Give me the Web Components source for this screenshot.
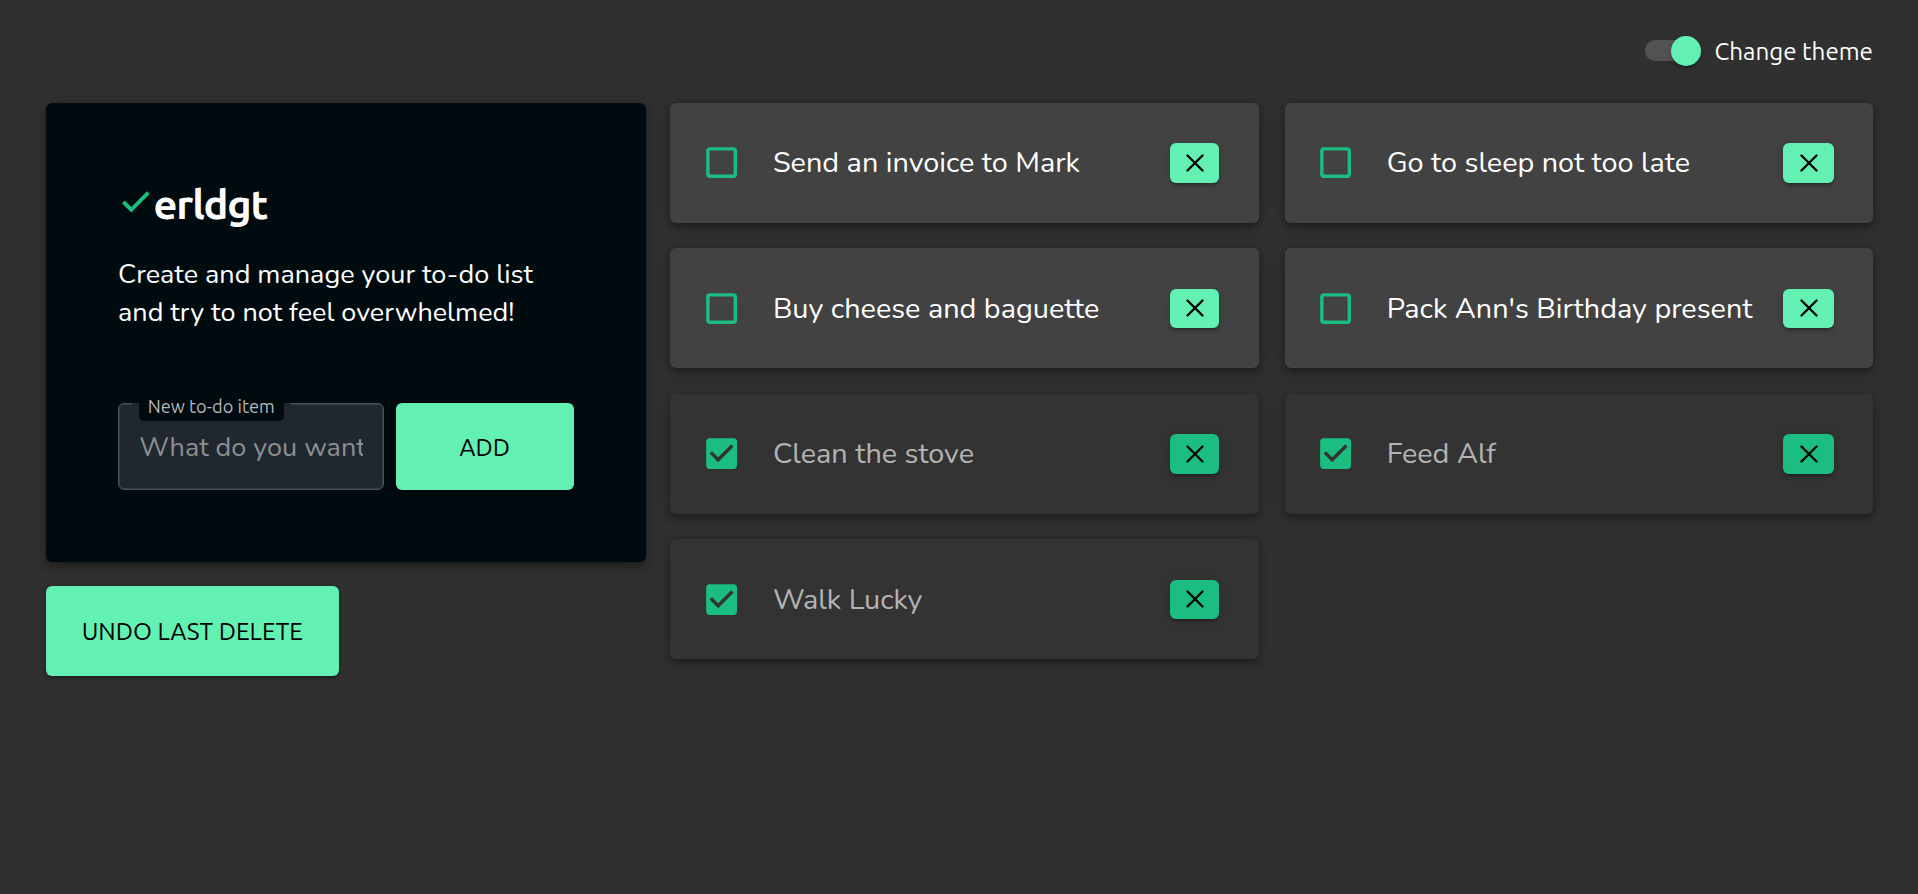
<!DOCTYPE html>
<html lang="en">
<head>
<meta charset="utf-8">
<title>erldgt</title>
<style>
html, body { margin: 0; background: #303030; }
body {
  --bg: #303030; --mint: #63f1b3; --green: #1bbd80; --ink: #000b10; --paper: #424242; --paper-done: #333333;
  --ui: Ubuntu, "Open Sans", "Noto Sans", sans-serif;
  --body: Nunito, Lato, "Open Sans", sans-serif;
  --lift: 0 3px 6px -1px rgba(0,0,0,.22), 0 6px 8px rgba(0,0,0,.14), 0 1px 15px rgba(0,0,0,.14);
  --btn-lift: 0 4px 2px -3px rgba(0,0,0,.2), 0 3px 3px rgba(0,0,0,.14), 0 1px 7px rgba(0,0,0,.12);
  color: #fff; font-family: var(--body);
}
</style>
</head>
<body>
<todo-app></todo-app>
<script>
const define = (name, html) => customElements.define(name, class extends HTMLElement {
  connectedCallback() {
    if (this.shadowRoot) return;
    const t = document.createElement('template');
    t.innerHTML = html;
    this.attachShadow({ mode: 'open' }).append(t.content.cloneNode(true));
  }
});

define('theme-switch', `<style>
:host{display:flex;align-items:center;width:228px;height:32px}
.track{flex:none;width:51px;height:21px;border-radius:11px;background:#525252;display:flex;align-items:center;justify-content:flex-end}
.thumb{flex:none;width:30px;height:30px;margin-right:-4.5px;border-radius:50%;background:var(--mint);box-shadow:var(--btn-lift)}
.label{margin:1.6px 0 0 18.4px;font:400 24.2px/32px var(--ui);white-space:nowrap}
</style><div class="track"><div class="thumb"></div></div>
<div class="label">Change theme</div>`);

define('mint-button', `<style>
:host{display:block}
button{display:flex;align-items:center;justify-content:center;width:100%;height:100%;border:0;padding:0;border-radius:6px;background:var(--fill,var(--mint));color:#000;box-shadow:var(--btn-lift);font:400 24.4px/32px var(--ui);white-space:nowrap}
</style><button><slot></slot></button>`);

define('brand-logo', `<style>
:host{display:flex;height:61px}
svg{flex:none;width:28px;height:23px;margin:17px 0 0 4.4px;fill:var(--green)}
.name{margin:1px 0 0 3.2px;font:700 41.5px/60px var(--ui);letter-spacing:-1.2px}
</style><svg viewBox="0 0 28 23"><path d="M0 13.2 2.7 10.5 9.3 17.1 25 1.3 27.7 4 9.3 22.4Z"/></svg>
<div class="name">erldgt</div>`);

define('text-field', `<style>
:host{display:block;position:relative;box-sizing:border-box;width:265.5px;height:87px;border:1px solid #4a5157;border-radius:6px;background:#20272f;box-shadow:inset 0 0 0 .5px #4a5157}
.notch{position:absolute;top:-1px;left:13px;width:159px;height:2px;background:#20272f}
.label{position:absolute;top:-10px;left:20px;width:145px;height:27px;box-sizing:border-box;padding-left:8.7px;border-radius:5px;background:var(--ink);color:#b3b6b7;font:400 18.2px/24px var(--ui);white-space:nowrap}
.hint{height:85px;margin:0 19.5px 0 20.2px;overflow:hidden;color:#8b8f92;font:400 27px/87px var(--body);white-space:nowrap}
</style><div class="notch"></div><div class="label">New to-do item</div>
<div class="hint">What do you want</div>`);

define('intro-card', `<style>
:host{display:block;box-sizing:border-box;width:600px;height:459px;padding:70px 72px 0;border-radius:6px;background:var(--ink);box-shadow:var(--lift)}
.copy{margin-top:22px;font:400 27px/38px var(--body);white-space:nowrap}
.form{display:flex;gap:12px;margin-top:71px}
mint-button{width:178.5px;height:87px}
</style><brand-logo></brand-logo>
<div class="copy">Create and manage your to-do list<br>and try to not feel overwhelmed!</div>
<div class="form"><text-field></text-field><mint-button>ADD</mint-button></div>`);

define('todo-item', `<style>
:host{display:flex;align-items:center;box-sizing:border-box;height:120px;padding:0 var(--end,40.2px) 0 var(--start,31.1px);border-radius:6px;background:var(--paper);box-shadow:var(--lift)}
:host([done]){background:var(--paper-done);--fill:var(--green)}
.box{flex:none;width:41.2px;height:41.2px;fill:var(--green)}
.on,:host([done]) .off{display:none}
:host([done]) .on{display:block}
.text{flex:1;min-width:0;margin:.7px 0 0 30.6px;font:400 28.85px/40px var(--body);white-space:nowrap}
:host([done]) .text{color:#b3b3b3}
mint-button{flex:none;width:var(--button,49.6px);height:39.3px}
.x{width:18px;height:18px;margin-left:.4px;stroke:#000;stroke-width:2.3;fill:none;stroke-linecap:round}
</style>
<svg class="box off" viewBox="0 0 24 24"><path d="M19 5v14H5V5h14m0-2H5c-1.1 0-2 .9-2 2v14c0 1.1.9 2 2 2h14c1.1 0 2-.9 2-2V5c0-1.1-.9-2-2-2z"/></svg>
<svg class="box on" viewBox="0 0 24 24"><path d="M19 3H5c-1.11 0-2 .9-2 2v14c0 1.1.89 2 2 2h14c1.11 0 2-.9 2-2V5c0-1.1-.89-2-2-2zm-9 14l-5-5 1.41-1.41L10 14.17l7.59-7.59L19 8l-9 9z"/></svg>
<div class="text"><slot></slot></div>
<mint-button><svg class="x" viewBox="0 0 18 18"><path d="M1.5 1.5 16.5 16.5M16.5 1.5 1.5 16.5"/></svg></mint-button>`);

define('todo-app', `<style>
:host{display:block;box-sizing:border-box;height:894px;padding:34.5px 45px 0 46px;background:var(--bg);overflow:hidden}
header{display:flex;justify-content:flex-end;height:68.5px}
main{display:flex;gap:24px;align-items:flex-start}
aside{display:flex;flex-direction:column;gap:24px}
.undo{width:292.6px;height:90px}
.list{display:grid;grid-template-columns:589.4px 588px;gap:25.45px 25.5px}
todo-item:nth-child(even){--start:30px;--end:39px;--button:51px}
</style>
<header><theme-switch></theme-switch></header>
<main><aside><intro-card></intro-card><mint-button class="undo">UNDO LAST DELETE</mint-button></aside>
<section class="list">
<todo-item>Send an invoice to Mark</todo-item>
<todo-item>Go to sleep not too late</todo-item>
<todo-item>Buy cheese and baguette</todo-item>
<todo-item>Pack Ann's Birthday present</todo-item>
<todo-item done>Clean the stove</todo-item>
<todo-item done>Feed Alf</todo-item>
<todo-item done>Walk Lucky</todo-item>
</section></main>`);
</script>
</body>
</html>
